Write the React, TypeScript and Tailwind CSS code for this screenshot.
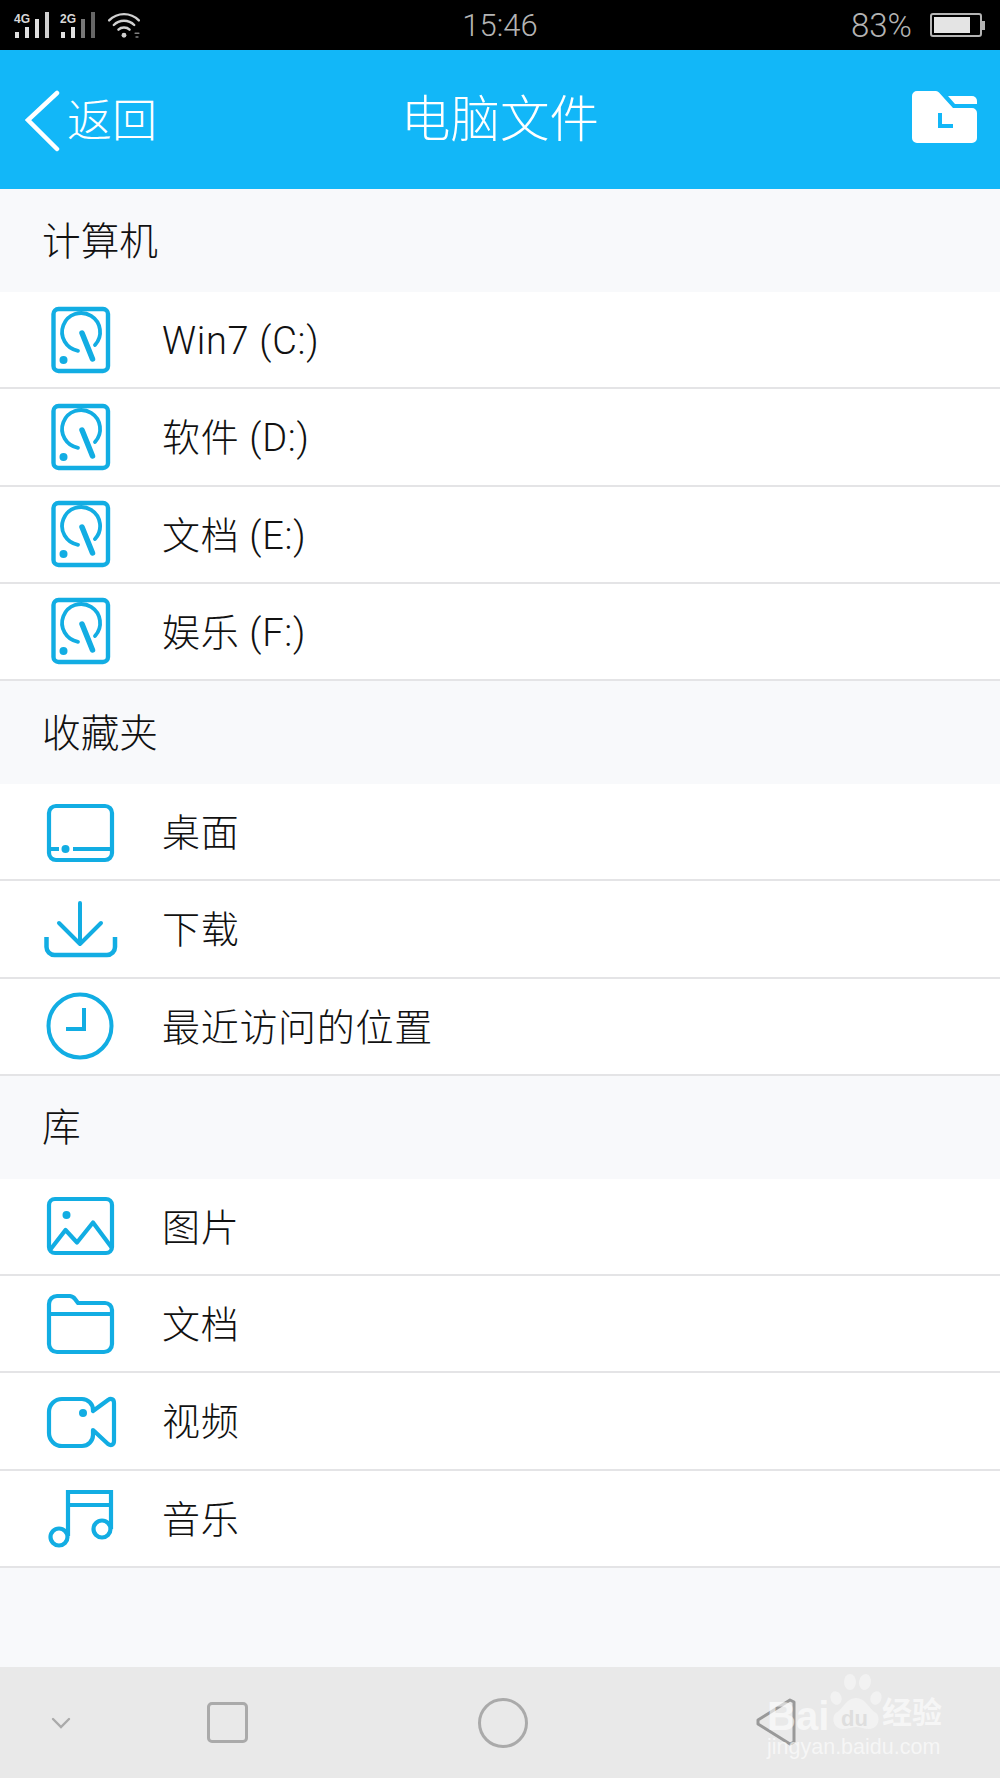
const cjk = "font-['Roboto','Noto_Sans_CJK_SC',sans-serif]";

function Drive() {
  return (
    <svg viewBox="0 0 80 80" className="h-20 w-20" fill="none" stroke="#12ade3" strokeWidth="4.4" strokeLinecap="round" strokeLinejoin="round">
      <rect x="13.5" y="9" width="54.5" height="62" rx="5" />
      <path d="M38 50.8A19 19 0 1 1 55 45" strokeWidth="3.8" />
      <path d="M42 33L52.5 59" strokeWidth="5.5" />
      <circle cx="23.5" cy="60" r="4" fill="#12ade3" stroke="none" />
    </svg>
  );
}

function Desktop() {
  return (
    <svg viewBox="0 0 80 80" className="h-20 w-20" fill="none" stroke="#12ade3" strokeWidth="4.2">
      <rect x="9" y="14" width="63" height="54" rx="7" />
      <path d="M9 57H19M33 57H72" />
      <circle cx="25.5" cy="57" r="4" fill="#12ade3" stroke="none" />
    </svg>
  );
}

function Download() {
  return (
    <svg viewBox="0 0 80 80" className="h-20 w-20" fill="none" stroke="#12ade3" strokeWidth="4.5" strokeLinecap="round" strokeLinejoin="round">
      <path d="M40 14V55M19 34L40 55L61 34" strokeWidth="4" />
      <path d="M6.5 48V58a8 8 0 0 0 8 8H67a8 8 0 0 0 8-8V48" strokeLinecap="butt" />
    </svg>
  );
}

function Clock() {
  return (
    <svg viewBox="0 0 80 80" className="h-20 w-20" fill="none" stroke="#12ade3" strokeWidth="4">
      <circle cx="40" cy="40" r="31.5" />
      <path d="M44 22V43H26" />
    </svg>
  );
}

function Picture() {
  return (
    <svg viewBox="0 0 80 80" className="h-20 w-20" fill="none" stroke="#12ade3" strokeWidth="4.2" strokeLinejoin="round">
      <rect x="9" y="13" width="63" height="54" rx="6" />
      <circle cx="26.5" cy="29" r="4" fill="#12ade3" stroke="none" />
      <path d="M10 64L25.5 44L37 56.5L53 36.5L72 62" />
    </svg>
  );
}

function Folder() {
  return (
    <svg viewBox="0 0 80 80" className="h-20 w-20" fill="none" stroke="#12ade3" strokeWidth="4.2" strokeLinejoin="round">
      <path d="M9 20a8 8 0 0 1 8-8H30a7 7 0 0 1 5 3l3 4H65a7 7 0 0 1 7 7V60a8 8 0 0 1-8 8H17a8 8 0 0 1-8-8Z" />
      <path d="M9 30H72" />
    </svg>
  );
}

function Video() {
  return (
    <svg viewBox="0 0 80 80" className="h-20 w-20" fill="none" stroke="#12ade3" strokeWidth="4.2" strokeLinejoin="round">
      <path d="M53 30V29a11 11 0 0 0-11-11H22a13 13 0 0 0-13 13V52a13 13 0 0 0 13 13H42a11 11 0 0 0 11-11V49L68 63c3 2 6 1 6-3V22c0-4-3-5-6-3Z" />
      <circle cx="43" cy="32" r="4" fill="#12ade3" stroke="none" />
    </svg>
  );
}

function Music() {
  return (
    <svg viewBox="0 0 80 80" className="h-20 w-20" fill="none" stroke="#12ade3" strokeWidth="4.2">
      <path d="M28 58V14H71V51M28 27H71" />
      <circle cx="19" cy="59" r="8.5" />
      <circle cx="62" cy="51" r="8.5" />
    </svg>
  );
}

const sections = [
  {
    title: "计算机",
    rows: [
      { icon: <Drive />, label: "Win7 (C:)" },
      { icon: <Drive />, label: "软件 (D:)" },
      { icon: <Drive />, label: "文档 (E:)" },
      { icon: <Drive />, label: "娱乐 (F:)" },
    ],
  },
  {
    title: "收藏夹",
    rows: [
      { icon: <Desktop />, label: "桌面" },
      { icon: <Download />, label: "下载" },
      { icon: <Clock />, label: "最近访问的位置" },
    ],
  },
  {
    title: "库",
    rows: [
      { icon: <Picture />, label: "图片" },
      { icon: <Folder />, label: "文档" },
      { icon: <Video />, label: "视频" },
      { icon: <Music />, label: "音乐" },
    ],
  },
];

function Signal({ label, dim }: { label: string; dim?: boolean }) {
  return (
    <div className="relative h-[26px] w-[34px]">
      <span className="absolute left-[-1px] top-[1px] font-['Liberation_Sans',sans-serif] text-[12px] font-bold leading-none text-[#d8d8d8]">{label}</span>
      <div className="absolute bottom-0 left-0 flex items-end gap-[6px]">
        <span className="h-[6px] w-[4px] bg-[#e0e0e0]" />
        <span className="h-[11px] w-[4px] bg-[#e0e0e0]" />
        <span className={`h-[19px] w-[4px] ${dim ? "bg-[#777777]" : "bg-[#e0e0e0]"}`} />
        <span className={`h-[26px] w-[4px] ${dim ? "bg-[#666666]" : "bg-[#d0d0d0]"}`} />
      </div>
    </div>
  );
}

export default function App() {
  return (
    <div className={`relative flex h-[1778px] w-[1000px] flex-col overflow-hidden bg-[#f8f9fb] ${cjk}`}>
      {/* status bar */}
      <div className="flex h-[50px] flex-none items-center bg-black text-[#b4b4b4]">
        <div className="flex w-[400px] items-center gap-[12px] pl-[15px]">
          <Signal label="4G" />
          <Signal label="2G" dim />
          <svg viewBox="0 0 36 28" className="h-[26px] w-[34px]" fill="none" stroke="#d0d0d0" strokeWidth="2.6" strokeLinecap="round">
            <path d="M2 9C11 0 25 0 34 9M7 14C13 8 23 8 29 14M12 19C15 16 21 16 24 19" />
            <circle cx="18" cy="25" r="2.6" fill="#d0d0d0" stroke="none" />
            <path d="M30 23h4M31 27h2" strokeWidth="1.6" stroke="#808080" />
          </svg>
        </div>
        <div className="w-[200px] text-center text-[31px] font-light leading-none">15:46</div>
        <div className="flex flex-1 items-center justify-end pr-[15px]">
          <span className="text-[33px] font-light leading-none">83%</span>
          <div className="ml-[18px] flex h-[24px] w-[52px] rounded-[3px] border-2 border-[#b4b4b4] p-[2px]">
            <div className="h-full w-[81%] bg-[#e4e4e4]" />
          </div>
          <div className="h-[9px] w-[3px] bg-[#b4b4b4]" />
        </div>
      </div>

      {/* title bar */}
      <div className="relative flex h-[139px] flex-none items-center bg-[#12b7f8] text-white">
        <svg viewBox="0 0 36 64" className="ml-[25px] h-[64px] w-[36px]" fill="none" stroke="#ffffff" strokeWidth="4.5" strokeLinecap="round">
          <path d="M32 5L3 32L32 61" />
        </svg>
        <span className="ml-[6px] pt-[4px] text-[45px] font-light leading-none">返回</span>
        <span className="absolute left-0 right-0 pt-[2px] text-center text-[49.5px] font-light leading-none">电脑文件</span>
        <svg viewBox="0 0 65 52" className="absolute left-[912px] top-[41px] h-[52px] w-[65px]" fill="#ffffff">
          <path d="M5 0H24a4 4 0 0 1 3 1.5L41 17H60a5 5 0 0 1 5 5V47a5 5 0 0 1-5 5H5a5 5 0 0 1-5-5V5a5 5 0 0 1 5-5Z" />
          <path d="M36 5H60a5 5 0 0 1 5 5V13H43Z" />
          <path d="M28 22V35H41" fill="none" stroke="#12b7f8" strokeWidth="4" />
        </svg>
      </div>

      {/* file list */}
      <div className="flex-1">
        {sections.map((section) => (
          <div key={section.title}>
            <div className="flex h-[103px] items-center pl-[42px] pt-[3px] text-[38.7px] font-light leading-none text-[#111111]">
              {section.title}
            </div>
            <div className="bg-white">
              {section.rows.map((row) => (
                <div key={row.label} className="flex h-[97.25px] items-center border-b-2 border-[#e4e4e6]">
                  <div className="ml-[40px] mr-[42px] flex-none">{row.icon}</div>
                  <span className="pt-[3px] text-[38px] font-light leading-none tracking-[0.7px] text-[#111111]">{row.label}</span>
                </div>
              ))}
            </div>
          </div>
        ))}
      </div>

      {/* nav bar */}
      <div className="relative flex h-[111px] flex-none items-center bg-[#e9e9e9]">
        <svg viewBox="0 0 20 12" className="ml-[51px] h-[12px] w-[20px]" fill="none" stroke="#aaaaaa" strokeWidth="2.4" strokeLinecap="round">
          <path d="M2 2L10 10L18 2" />
        </svg>
        <div className="ml-[136px] h-[41px] w-[41px] rounded-[5px] border-[3px] border-[#aaaaaa]" />
        <div className="ml-[230px] h-[50px] w-[50px] rounded-full border-[3px] border-[#aaaaaa]" />
        <svg viewBox="0 0 44 50" className="ml-[226px] h-[50px] w-[44px]" fill="none" stroke="#999999" strokeWidth="3" strokeLinejoin="round">
          <path d="M36 2L40 4V44L36 46L4 26V22Z" />
        </svg>

        {/* watermark */}
        <div className="absolute left-[767px] top-[4px] h-[100px] w-[180px] text-white/60">
          <span className="absolute left-0 top-[25px] font-['Liberation_Sans',sans-serif] text-[40px] font-bold leading-none">Bai</span>
          <svg viewBox="0 0 56 60" className="absolute left-[61px] top-[2px] h-[60px] w-[56px]" fill="#f4f4f4" fillOpacity="0.8">
            <ellipse cx="8" cy="25" rx="5.5" ry="7" transform="rotate(-20 8 25)" />
            <ellipse cx="22" cy="9" rx="6" ry="8" />
            <ellipse cx="37" cy="9" rx="6" ry="8" transform="rotate(10 37 9)" />
            <ellipse cx="48" cy="25" rx="5.5" ry="7" transform="rotate(20 48 25)" />
            <path d="M28 25c10 0 12 10 20 15c5 4 3 16-7 16c-5 0-9-2-13-2s-8 2-13 2c-10 0-12-12-7-16c8-5 10-15 20-15Z" />
          </svg>
          <span className="absolute left-[74px] top-[37px] font-['Liberation_Sans',sans-serif] text-[22px] font-bold leading-none text-[#dedede]">du</span>
          <span className="absolute left-[115px] top-[27px] text-[30px] font-bold leading-none">经验</span>
          <span className="absolute left-0 top-[66px] font-['Liberation_Sans',sans-serif] text-[21.5px] leading-none">jingyan.baidu.com</span>
        </div>
      </div>
    </div>
  );
}
